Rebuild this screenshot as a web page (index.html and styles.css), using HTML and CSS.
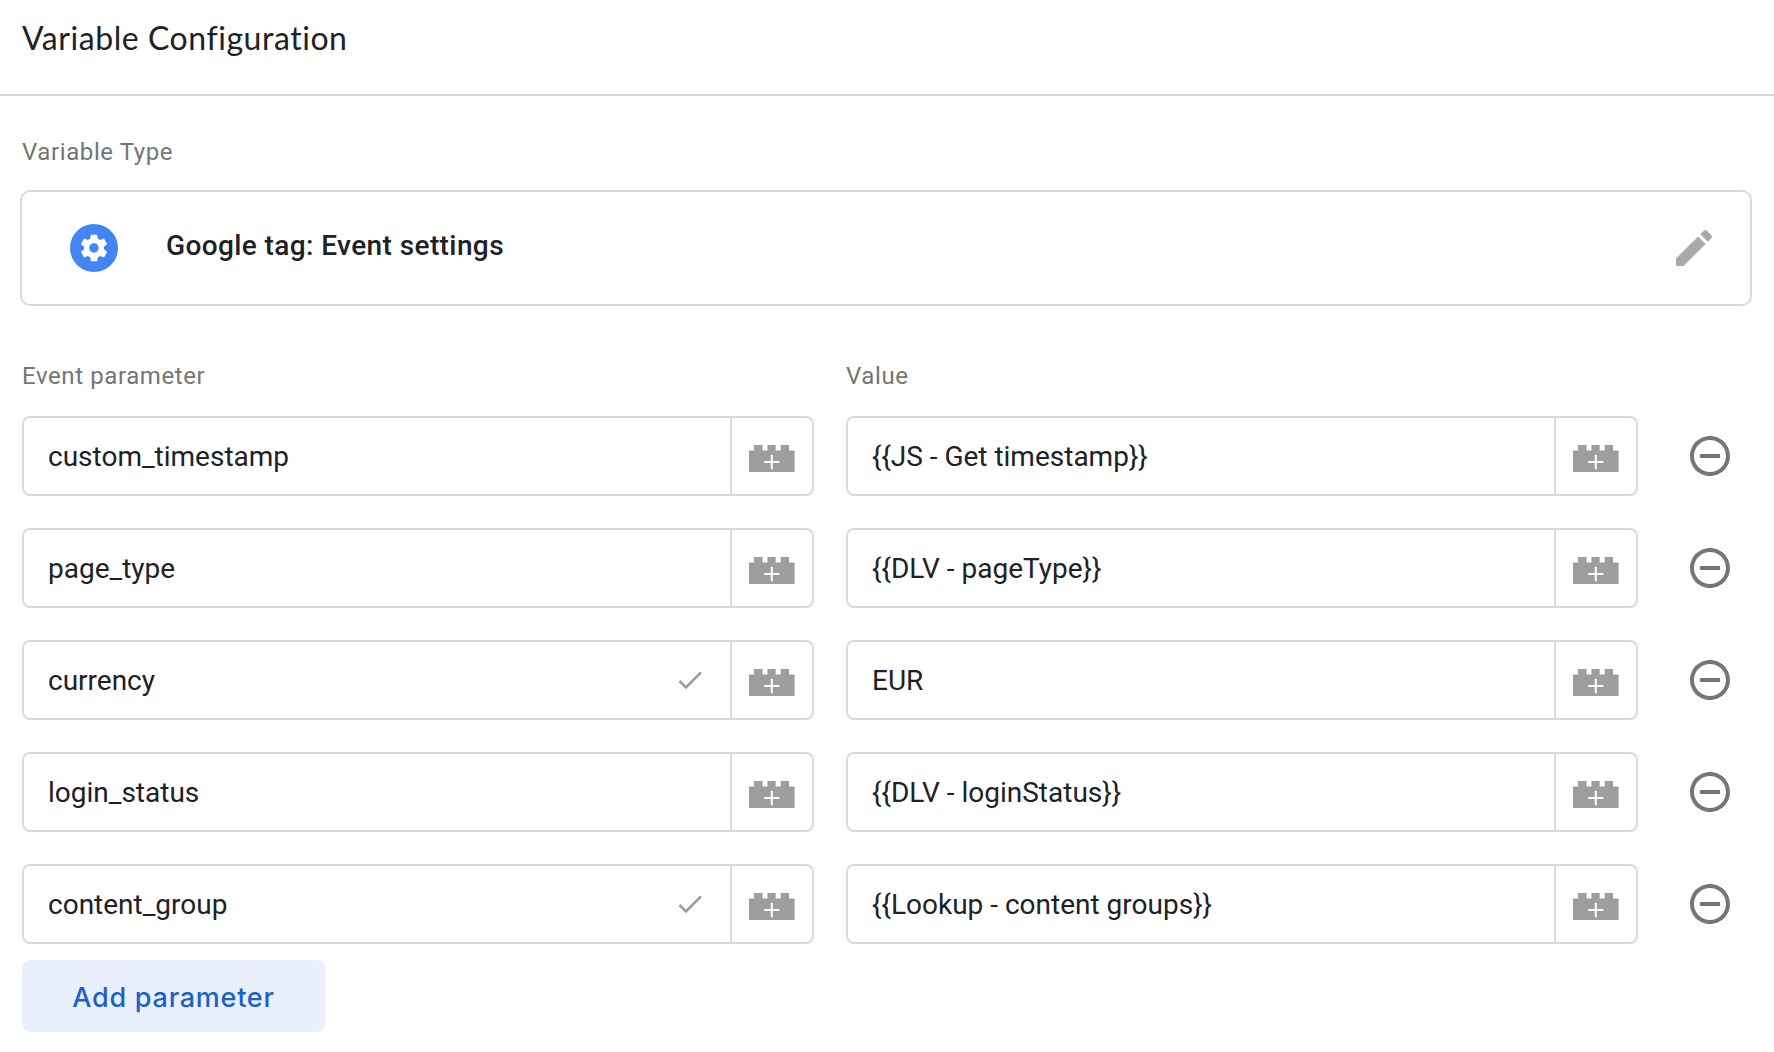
FILE: index.html
```html
<!DOCTYPE html>
<html lang="en">
<head>
<meta charset="utf-8">
<title>Variable Configuration</title>
<link rel="stylesheet" href="styles.css">
</head>
<body>
<svg class="sprite" aria-hidden="true">
  <symbol id="brick" viewBox="0 0 46 27">
    <path fill="#9e9e9e" d="M0 5.5H5V0h8.5v5.5h5V0h8.2v5.5h5V0H40v5.5h5.6V27H0z"/>
    <path stroke="#fff" stroke-width="2" d="M15.3 17h15M22.8 9.7v14.6"/>
  </symbol>
  <symbol id="check" viewBox="0 0 24 24">
    <path fill="#9e9e9e" d="M9 16.17 4.83 12l-1.42 1.41L9 19 21 7l-1.41-1.41z"/>
  </symbol>
  <symbol id="remove" viewBox="0 0 24 24">
    <path fill="#757575" d="M7 11v2h10v-2H7zm5-9C6.48 2 2 6.48 2 12s4.48 10 10 10 10-4.48 10-10S17.52 2 12 2zm0 18c-4.41 0-8-3.59-8-8s3.59-8 8-8 8 3.59 8 8-3.59 8-8 8z"/>
  </symbol>
</svg>
<header class="header"><h1 class="title">Variable Configuration</h1></header>
<main class="content">
  <div class="label type-label">Variable Type</div>
  <section class="type-card">
    <span class="type-icon"><svg width="32" height="32" viewBox="0 0 24 24"><path fill="#fff" d="M19.43 12.98c.04-.32.07-.64.07-.98s-.03-.66-.07-.98l2.11-1.65c.19-.15.24-.42.12-.64l-2-3.46c-.12-.22-.39-.3-.61-.22l-2.49 1c-.52-.4-1.08-.73-1.69-.98l-.38-2.65C14.46 2.18 14.25 2 14 2h-4c-.25 0-.46.18-.49.42l-.38 2.65c-.61.25-1.17.59-1.69.98l-2.49-1c-.23-.09-.49 0-.61.22l-2 3.46c-.13.22-.07.49.12.64l2.11 1.65c-.04.32-.07.65-.07.98s.03.66.07.98l-2.11 1.65c-.19.15-.24.42-.12.64l2 3.46c.12.22.39.3.61.22l2.49-1c.52.4 1.08.73 1.69.98l.38 2.65c.03.24.24.42.49.42h4c.25 0 .46-.18.49-.42l.38-2.65c.61-.25 1.17-.59 1.69-.98l2.49 1c.23.09.49 0 .61-.22l2-3.46c.12-.22.07-.49-.12-.64l-2.11-1.65zM12 15.5c-1.93 0-3.5-1.57-3.5-3.5s1.57-3.5 3.5-3.5 3.5 1.57 3.5 3.5-1.57 3.5-3.5 3.5z"/></svg></span>
    <span class="type-name">Google tag: Event settings</span>
    <svg class="edit" width="48" height="48" viewBox="0 0 24 24"><path fill="#aaa" d="M3 17.25V21h3.75L17.81 9.94l-3.75-3.75L3 17.25zM20.71 7.04c.39-.39.39-1.02 0-1.41l-2.34-2.34c-.39-.39-1.02-.39-1.41 0l-1.83 1.83 3.75 3.75 1.83-1.83z"/></svg>
  </section>
  <div class="row labels">
    <span class="label">Event parameter</span><span class="label">Value</span>
  </div>
  <div class="rows">
    <div class="row">
      <div class="field"><span class="text">custom_timestamp</span><span class="picker"><svg class="brick"><use href="#brick"/></svg></span></div>
      <div class="field"><span class="text">{{JS - Get timestamp}}</span><span class="picker"><svg class="brick"><use href="#brick"/></svg></span></div>
      <svg class="remove"><use href="#remove"/></svg>
    </div>
    <div class="row">
      <div class="field"><span class="text">page_type</span><span class="picker"><svg class="brick"><use href="#brick"/></svg></span></div>
      <div class="field"><span class="text">{{DLV - pageType}}</span><span class="picker"><svg class="brick"><use href="#brick"/></svg></span></div>
      <svg class="remove"><use href="#remove"/></svg>
    </div>
    <div class="row">
      <div class="field"><span class="text">currency</span><svg class="check"><use href="#check"/></svg><span class="picker"><svg class="brick"><use href="#brick"/></svg></span></div>
      <div class="field"><span class="text">EUR</span><span class="picker"><svg class="brick"><use href="#brick"/></svg></span></div>
      <svg class="remove"><use href="#remove"/></svg>
    </div>
    <div class="row">
      <div class="field"><span class="text">login_status</span><span class="picker"><svg class="brick"><use href="#brick"/></svg></span></div>
      <div class="field"><span class="text">{{DLV - loginStatus}}</span><span class="picker"><svg class="brick"><use href="#brick"/></svg></span></div>
      <svg class="remove"><use href="#remove"/></svg>
    </div>
    <div class="row">
      <div class="field"><span class="text">content_group</span><svg class="check"><use href="#check"/></svg><span class="picker"><svg class="brick"><use href="#brick"/></svg></span></div>
      <div class="field"><span class="text">{{Lookup - content groups}}</span><span class="picker"><svg class="brick"><use href="#brick"/></svg></span></div>
      <svg class="remove"><use href="#remove"/></svg>
    </div>
  </div>
  <button class="add" type="button">Add parameter</button>
</main>
</body>
</html>
```
FILE: styles.css
```css
* { box-sizing: border-box; }
body { margin: 0; background: #fff; color: #202124; font-family: Roboto, "Liberation Sans", sans-serif; }
svg { display: block; flex: none; }
.sprite { display: none; }
.header { height: 96px; padding: 18px 22px 0; border-bottom: 2px solid #dadada; }
.title { margin: 0; font: 400 32px/40px "Google Sans", Lato, sans-serif; letter-spacing: 0.55px; }
.content { padding: 0 22px; }
.label { font-size: 24px; line-height: 32px; letter-spacing: 0.6px; color: #757575; }
.type-label { padding-top: 40px; }
.type-card { display: flex; align-items: center; height: 116px; margin: 22px 0 0 -2px; padding: 0 32px 0 48px; border: 2px solid #dadada; border-radius: 10px; }
.type-icon { display: flex; align-items: center; justify-content: center; width: 48px; height: 48px; border-radius: 50%; background: #4285f4; }
.type-name { flex: 1; margin-left: 48px; padding-bottom: 5px; font-size: 28px; font-weight: 500; line-height: 36px; letter-spacing: 0.4px; }
.row { display: grid; grid-template-columns: 792px 792px 48px; column-gap: 32px; align-items: center; }
.labels { margin-top: 54px; }
.rows { display: grid; row-gap: 32px; margin-top: 24px; }
.row .remove { width: 48px; height: 48px; margin-left: 16px; }
.field { display: flex; align-items: center; height: 80px; border: 2px solid #dadada; border-radius: 8px; }
.text { flex: 1; padding: 2px 0 0 24px; font-size: 28px; line-height: 36px; }
.check { width: 32px; height: 32px; margin-right: 24px; }
.picker { display: flex; width: 82px; height: 100%; padding: 27px 0 0 17px; border-left: 2px solid #dadada; }
.brick { width: 46px; height: 27px; }
.add { display: block; width: 303px; height: 72px; margin-top: 16px; padding: 4px 0 0; border: 0; border-radius: 8px; background: #e9f0fc; color: #1a62c8; font: 500 27px/36px "Google Sans", Inter, sans-serif; letter-spacing: 0.75px; }
```
